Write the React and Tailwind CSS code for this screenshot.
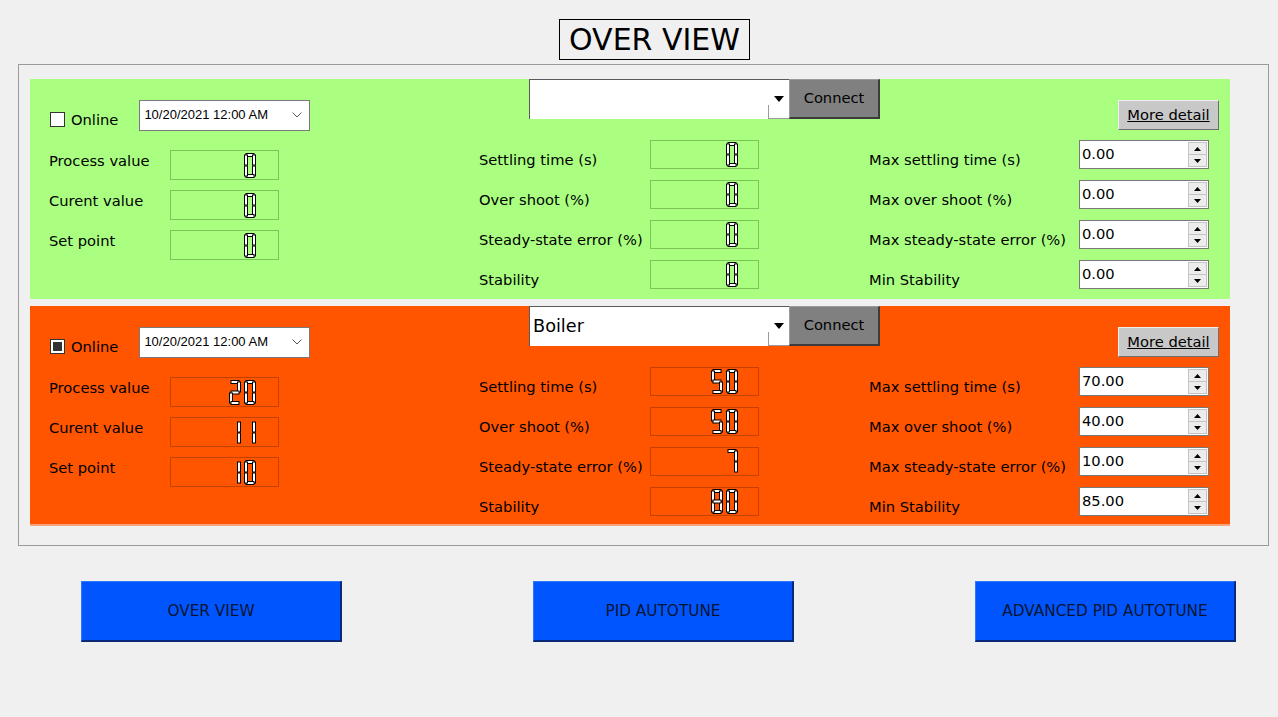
import React from "react";

const SEGS = {
    a: [2, 0.5, 8, 3],
    b: [8.5, 2, 3, 10],
    c: [8.5, 13, 3, 10],
    d: [2, 21.5, 8, 3],
    e: [0.5, 13, 3, 10],
    f: [0.5, 2, 3, 10],
    g: [2, 11, 8, 3],
};

const DIGITS = {
    "0": "abcdef",
    "1": "bc",
    "2": "abged",
    "3": "abgcd",
    "4": "fgbc",
    "5": "afgcd",
    "6": "afgedc",
    "7": "abc",
    "8": "abcdefg",
    "9": "abcdfg",
};

const Digit = ({ d }) => (
    <svg width="12" height="25" viewBox="0 0 12 25">
        {DIGITS[d].split("").map((s) => {
            const [x, y, w, h] = SEGS[s];
            return <rect key={s} x={x} y={y} width={w} height={h} fill="#ffffff" stroke="#000000" strokeWidth="1" />;
        })}
    </svg>
);

const Lcd = ({ value, tall, orange }) => (
    <div className={`flex shrink-0 items-center justify-end gap-[3px] w-[109px] ${tall ? "h-[30px] pr-[22px]" : "h-[29px] pr-[20px]"} border ${orange ? "border-[#c44200]" : "border-[#7cc35a]"}`}>
        {String(value).split("").map((d, i) => <Digit key={i} d={d} />)}
    </div>
);

const Spin = ({ value }) => (
    <div className="flex shrink-0 w-[130px] h-[29px] bg-white border border-[#7a7a7a]">
        <div className="flex-1 flex items-center pl-[2px] text-[14.7px] text-black">{value}</div>
        <div className="flex flex-col w-[19px] my-[1px] mr-[1px]">
            <div className="flex-1 flex items-center justify-center bg-[#ececec] border border-[#c4c4c4]">
                <svg width="7" height="4" viewBox="0 0 7 4"><path d="M0 4 L3.5 0 L7 4 Z" fill="#000" /></svg>
            </div>
            <div className="flex-1 flex items-center justify-center bg-[#ececec] border border-t-0 border-[#c4c4c4]">
                <svg width="7" height="4" viewBox="0 0 7 4"><path d="M0 0 L3.5 4 L7 0 Z" fill="#000" /></svg>
            </div>
        </div>
    </div>
);

const Panel = ({ data, orange }) => {
    const left = [
        ["Process value", data.pv],
        ["Curent value", data.cv],
        ["Set point", data.sp],
    ];
    const mid = [
        ["Settling time (s)", data.st],
        ["Over shoot (%)", data.os],
        ["Steady-state error (%)", data.sse],
        ["Stability", data.stab],
    ];
    const right = [
        ["Max settling time (s)", data.mst],
        ["Max over shoot (%)", data.mos],
        ["Max steady-state error (%)", data.msse],
        ["Min Stability", data.mstab],
    ];
    return (
        <div className={`flex shrink-0 h-[220px] pl-[19px] text-[14.7px] text-black ${orange ? "bg-[#ff5500] border-b-2 border-[#f7a47a]" : "bg-[#aaff80]"}`}>
            {/* left column */}
            <div className="w-[260px] shrink-0 pt-[21px] flex flex-col">
                <div className="flex shrink-0 items-center h-[30px]">
                    <div className="shrink-0 ml-[1px] w-[15px] h-[15px] bg-white border border-[#333] flex items-center justify-center translate-y-[4px]">
                        {data.online && <div className="w-[9px] h-[9px] bg-[#333]" />}
                    </div>
                    <span className="ml-[6px] translate-y-[5px]">Online</span>
                    <div className="shrink-0 ml-[21px] w-[171px] h-[31px] bg-white border border-[#7a7a7a] flex items-center justify-between pl-[4px] pr-[7px]">
                        <span className="text-[13px] whitespace-nowrap font-['Liberation_Sans',Arial,sans-serif]">10/20/2021 12:00 AM</span>
                        <svg width="10" height="6" viewBox="0 0 10 6"><path d="M0.5 0.5 L5 5 L9.5 0.5" fill="none" stroke="#555" strokeWidth="1" /></svg>
                    </div>
                </div>
                <div className="flex flex-col gap-[10px] mt-[20px]">
                    {left.map(([l, v]) => (
                        <div key={l} className="flex shrink-0 items-center">
                            <span className="w-[121px] shrink-0 -translate-y-[4px] whitespace-nowrap">{l}</span>
                            <Lcd value={v} tall orange={orange} />
                        </div>
                    ))}
                </div>
            </div>

            {/* middle column */}
            <div className="ml-[170px] w-[390px] shrink-0 flex flex-col">
                <div className="flex shrink-0 ml-[50px] h-[40px]">
                    <div className="shrink-0 w-[260px] bg-white border-l border-t border-[#5a5a5a] flex items-center justify-between">
                        <span className="ml-[3px] text-[17.7px]">{data.device}</span>
                        <div className="w-[21px] h-full flex flex-col items-center">
                            <div className="flex-1 w-full flex items-end justify-center pb-[3px]">
                                <svg width="10" height="6" viewBox="0 0 10 6"><path d="M0 0 L10 0 L5 6 Z" fill="#000" /></svg>
                            </div>
                            <div className="h-[14px] w-full border-l border-b border-[#9a9a9a]" />
                        </div>
                    </div>
                    <div className="shrink-0 w-[91px] bg-[#808080] border-r-2 border-b-2 border-[#3c3c3c] border-l border-t border-l-[#9a9a9a] border-t-[#9a9a9a] flex items-center justify-center">
                        Connect
                    </div>
                </div>
                <div className="flex flex-col gap-[11px] mt-[21px]">
                    {mid.map(([l, v]) => (
                        <div key={l} className="flex shrink-0 items-center">
                            <span className="w-[171px] shrink-0 translate-y-[6px] whitespace-nowrap">{l}</span>
                            <Lcd value={v} orange={orange} />
                        </div>
                    ))}
                </div>
            </div>

            {/* right column */}
            <div className="w-[350px] shrink-0 pt-[21px] flex flex-col">
                <div className="flex shrink-0 justify-end h-[30px]">
                    <div className="w-[101px] h-[30px] bg-[#c8c8c8] border border-t-[#f0f0f0] border-l-[#f0f0f0] border-r-[#6e6e6e] border-b-[#6e6e6e] flex items-center justify-center underline">
                        More detail
                    </div>
                </div>
                <div className="flex flex-col gap-[11px] mt-[10px]">
                    {right.map(([l, v]) => (
                        <div key={l} className="flex shrink-0 items-center">
                            <span className="w-[210px] shrink-0 translate-y-[6px] whitespace-nowrap">{l}</span>
                            <Spin value={v} />
                        </div>
                    ))}
                </div>
            </div>
        </div>
    );
};

const NavButton = ({ text, className }) => (
    <div className={`shrink-0 w-[261px] h-[61px] bg-[#0055ff] border border-t-[#2f78ff] border-l-[#2f78ff] border-r-2 border-b-2 border-r-[#0a2a78] border-b-[#0a2a78] flex items-center justify-center text-[15.3px] text-[#0a1530] ${className || ""}`}>
        {text}
    </div>
);

const App = () => {
    const first = {
        online: false, device: "", pv: "0", cv: "0", sp: "0",
        st: "0", os: "0", sse: "0", stab: "0",
        mst: "0.00", mos: "0.00", msse: "0.00", mstab: "0.00",
    };
    const second = {
        online: true, device: "Boiler", pv: "20", cv: "11", sp: "10",
        st: "50", os: "50", sse: "7", stab: "80",
        mst: "70.00", mos: "40.00", msse: "10.00", mstab: "85.00",
    };

    return (
        <div className="w-[1278px] h-[717px] bg-[#f0f0f0] font-['DejaVu_Sans',sans-serif] flex flex-col">
            <div className="flex pt-[19px] pl-[559px]">
                <div className="w-[191px] h-[41px] border border-black flex items-center justify-center text-[30px] text-black leading-none">
                    OVER VIEW
                </div>
            </div>

            <div className="mt-[4px] ml-[18px] w-[1251px] h-[482px] border border-[#9a9a9a] pl-[11px] pr-[38px] pt-[14px] flex flex-col gap-[7px]">
                <Panel data={first} />
                <Panel data={second} orange />
            </div>

            <div className="flex pl-[81px] mt-[35px]">
                <NavButton text="OVER VIEW" />
                <NavButton text="PID AUTOTUNE" className="ml-[191px]" />
                <NavButton text="ADVANCED PID AUTOTUNE" className="ml-[181px]" />
            </div>
        </div>
    );
};

export default App;
